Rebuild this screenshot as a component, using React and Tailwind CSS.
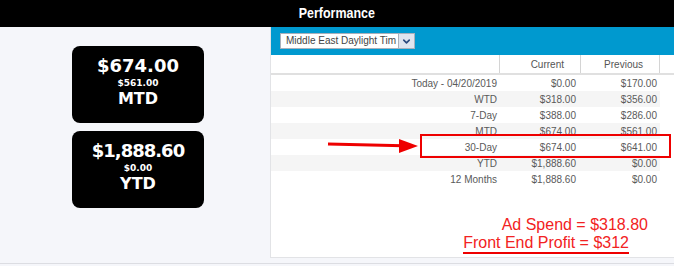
import { ChevronDown } from 'lucide-react';

const rows = [
  { label: 'Today - 04/20/2019', cur: '$0.00', prev: '$170.00' },
  { label: 'WTD', cur: '$318.00', prev: '$356.00' },
  { label: '7-Day', cur: '$388.00', prev: '$286.00' },
  { label: 'MTD', cur: '$674.00', prev: '$561.00' },
  { label: '30-Day', cur: '$674.00', prev: '$641.00' },
  { label: 'YTD', cur: '$1,888.60', prev: '$0.00' },
  { label: '12 Months', cur: '$1,888.60', prev: '$0.00' },
];

function StatBox({ big, small, label, tight }) {
  return (
    <div className="w-[132px] h-[77px] rounded-[8px] bg-black text-white flex flex-col items-center pt-[10px] font-['DejaVu_Sans',sans-serif] font-bold">
      <div className={`text-[18px] leading-[20px] ${tight ? 'tracking-[-1px]' : ''}`}>{big}</div>
      <div className="text-[9px] leading-[14px]">{small}</div>
      <div className="text-[16px] leading-[18px]">{label}</div>
    </div>
  );
}

export default function App() {
  return (
    <div className="w-[674px] h-[266px] bg-[#f5f6fa] flex flex-col overflow-hidden font-['Liberation_Sans',Arial,sans-serif]">
      {/* Title bar */}
      <div className="h-[27px] bg-black flex items-center justify-center shrink-0">
        <span className="inline-block text-white font-bold text-[15px] scale-x-[0.83]">Performance</span>
      </div>

      <div className="h-[237px] flex border-b border-[#dcdde2] shrink-0">
        {/* Left summary boxes */}
        <div className="w-[270px] pl-[72px] pt-[19px] flex flex-col gap-[8px]">
          <StatBox big="$674.00" small="$561.00" label="MTD" />
          <StatBox big="$1,888.60" small="$0.00" label="YTD" tight />
        </div>

        {/* Right panel */}
        <div className="flex-1 h-[231px] bg-white border-l border-b border-[#e2e3e6] relative flex flex-col">
          <div className="h-[28px] bg-[#0099cf] pl-[9px] pt-[6px] shrink-0">
            <div className="flex w-[135px] h-[16px] bg-white border border-[#a9b0bb]">
              <div className="flex-1 text-[10px] leading-[14px] text-[#444] pl-[5px] overflow-hidden whitespace-nowrap">Middle East Daylight Tim</div>
              <div className="w-[16px] bg-[#dfe5ef] border-l border-[#a9b0bb] flex items-center justify-center">
                <ChevronDown className="w-[11px] h-[11px] text-[#2b4a7e]" strokeWidth={3.5} />
              </div>
            </div>
          </div>

          <div className="flex h-[20px] border-b-2 border-[#e0e0e0] text-[10px] text-[#555] shrink-0">
            <div className="w-[228px]" />
            <div className="w-[81px] border-l border-[#d4d4d4] flex items-center justify-end pr-[16px]">Current</div>
            <div className="w-[80px] border-l border-r border-[#d4d4d4] flex items-center justify-end pr-[16px]">Previous</div>
          </div>

          <div className="w-[389px] flex flex-col text-[10px] text-[#5a5a5a]">
            {rows.map((r, i) => (
              <div key={r.label} className={`flex h-[16px] items-center ${i % 2 === 1 ? 'bg-[#f5f5f5]' : 'bg-white'}`}>
                <div className="w-[228px] text-right pr-[2px]">{r.label}</div>
                <div className="w-[81px] text-right pr-[4px]">{r.cur}</div>
                <div className="w-[80px] text-right pr-[3px]">{r.prev}</div>
              </div>
            ))}
          </div>

          {/* Annotations */}
          <div className="flex flex-col items-end mt-[29px] text-[16px] leading-[18px] text-[#f22222]">
            <div className="mr-[26px]">Ad Spend = $318.80</div>
            <div className="mr-[45px] border-b-2 border-[#ee0000]">Front End Profit = $312</div>
          </div>

          <div className="absolute left-[149px] top-[107px] w-[251px] h-[24px] border-2 border-[#ee0000]" />
          <svg className="absolute left-[50px] top-[105px]" width="100" height="25" viewBox="0 0 100 25">
            <line x1="7" y1="12" x2="82" y2="13.7" stroke="#ee0000" strokeWidth="3" />
            <polygon points="97,14 78,7 78,21" fill="#ee0000" />
          </svg>
        </div>
      </div>
    </div>
  );
}
